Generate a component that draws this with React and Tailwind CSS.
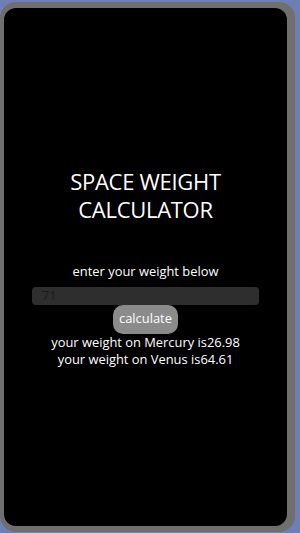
export default function App() {
    return (
        <div className="w-[300px] h-[533px] bg-[#6e7fb4] pt-[2px] overflow-hidden" style={{ fontFamily: '"Open Sans", "Noto Sans", sans-serif' }}>
            {/* phone frame */}
            <div className="w-[295px] h-[530px] bg-[#6f6f6f] rounded-[16px] pl-[4px] pr-[8px] pt-[6px] pb-[6px]">
                <div className="h-full bg-black rounded-[12px] flex flex-col items-center justify-center text-white">
                    <h1 className="text-[22px] leading-[28px] text-center tracking-[-0.3px]">
                        SPACE WEIGHT<br />CALCULATOR
                    </h1>
                    <p className="mt-[40px] text-[12.9px] leading-[17px]">enter your weight below</p>
                    <input
                        defaultValue="71"
                        className="mt-[7px] w-[227px] h-[18px] bg-[#2e2e2e] rounded-[4px] px-[10px] text-[12.5px] leading-[16px] text-[#1c1c1c] outline-none"
                    />
                    <button className="w-[65px] h-[29px] bg-[#8b8b8b] rounded-[10px] text-[12.9px] text-white">
                        calculate
                    </button>
                    <div className="flex flex-col items-center text-[12.9px] leading-[17px]">
                        <p>your weight on Mercury is26.98</p>
                        <p>your weight on Venus is64.61</p>
                    </div>
                </div>
            </div>
        </div>
    );
}
